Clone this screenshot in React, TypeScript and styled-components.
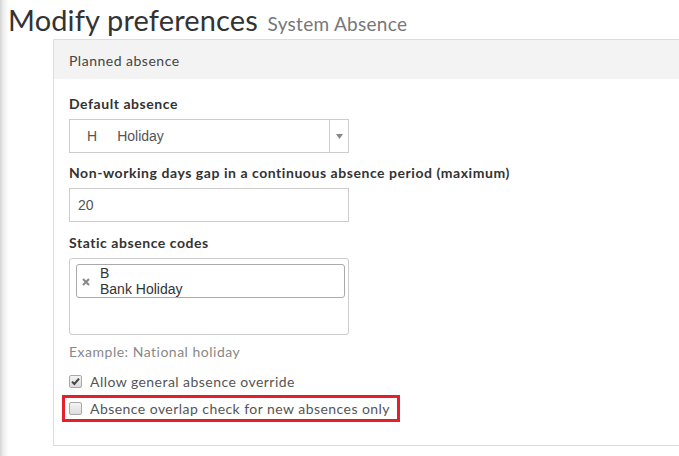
import React, { useState } from 'react';
import { styled, createGlobalStyle } from 'styled-components';

const GlobalStyle = createGlobalStyle`
  html, body {
    margin: 0;
    padding: 0;
    background: #fff;
  }
  body {
    font-family: Lato, "Open Sans", sans-serif;
    color: #333;
    overflow: hidden;
  }
`;

const Page = styled.div`
  width: 679px;
  height: 456px;
  overflow: hidden;
  padding-left: 8px;
  box-sizing: border-box;
  background: linear-gradient(to right, #d4d4d4 0px, #ececec 3px, #fafafa 7px, #fff 9px);
`;

const Title = styled.h1`
  margin: 0;
  padding-top: 3px;
  height: 36px;
  font-size: 29px;
  line-height: 34px;
  font-weight: 400;
  letter-spacing: 0.15px;
  color: #333;
  white-space: nowrap;

  small {
    font-size: 19px;
    letter-spacing: 0.3px;
    color: #777;
    margin-left: 2px;
  }
`;

const Panel = styled.section`
  margin-left: 45px;
  width: 700px;
  border: 1px solid #ddd;
  background: #fff;
`;

const PanelHeading = styled.div`
  height: 39px;
  line-height: 41px;
  padding: 0 15px;
  background: #f3f3f3;
  font-size: 14px;
  letter-spacing: 0.5px;
  color: #444;
`;

const PanelBody = styled.div`
  padding: 15px 15px 23px;
`;

const Label = styled.label<{ $top?: number }>`
  display: block;
  margin-top: ${(p) => p.$top ?? 0}px;
  margin-bottom: 5px;
  line-height: 20px;
  font-size: 14px;
  font-weight: 700;
  letter-spacing: 0.55px;
  color: #333;
`;

const SelectBox = styled.div`
  display: flex;
  width: 280px;
  height: 34px;
  box-sizing: border-box;
  border: 1px solid #ccc;
  font-family: "Liberation Sans", Arial, sans-serif;
  font-size: 14px;
  color: #555;
`;

const SelectValue = styled.div`
  flex: 1;
  display: flex;
  align-items: center;
  padding-left: 17px;
  gap: 20px;
`;

const SelectArrow = styled.div`
  width: 18px;
  border-left: 1px solid #ccc;
  display: flex;
  align-items: center;
  justify-content: center;
`;

const TextInput = styled.input`
  display: block;
  width: 280px;
  height: 34px;
  box-sizing: border-box;
  border: 1px solid #ccc;
  padding: 0 8px;
  font-family: "Liberation Sans", Arial, sans-serif;
  font-size: 14px;
  color: #555;
  outline: none;
`;

const TagArea = styled.div`
  width: 280px;
  height: 77px;
  box-sizing: border-box;
  border: 1px solid #ccc;
  border-radius: 3px;
  padding: 5px 3px 6px 6px;
`;

const Tag = styled.div`
  display: flex;
  align-items: center;
  height: 34px;
  box-sizing: border-box;
  border: 1px solid #aaa;
  border-radius: 3px;
  padding: 0 6px 0 5px;
  font-family: "Liberation Sans", Arial, sans-serif;
  font-size: 14px;
  line-height: 16px;
  color: #333;
`;

const TagRemove = styled.span`
  width: 10px;
  margin-right: 8px;
  display: flex;
  align-items: center;
  margin-top: 1px;
`;

const HelpText = styled.div`
  margin-top: 7px;
  line-height: 20px;
  font-size: 14px;
  letter-spacing: 0.5px;
  color: #888;
`;

const CheckList = styled.div`
  margin-top: 9px;
`;

const CheckRow = styled.label`
  display: flex;
  align-items: center;
  gap: 8px;
  height: 20px;
  font-size: 14px;
  letter-spacing: 0.45px;
  color: #555;
  cursor: pointer;
`;

const Box = styled.span`
  width: 11px;
  height: 11px;
  flex: none;
  border: 1px solid #a8a8a8;
  border-radius: 2px;
  background: linear-gradient(#f4f4f4, #dcdcdc);
  display: flex;
  align-items: center;
  justify-content: center;
`;

const Highlight = styled.div`
  display: inline-block;
  margin-top: 4px;
  margin-left: -7px;
  padding: 0 7px 1px 4px;
  border: 3px solid #e5202a;
`;

function Checkbox({ checked, onToggle, children }: { checked: boolean; onToggle: () => void; children: React.ReactNode }) {
  return (
    <CheckRow onClick={onToggle}>
      <Box>
        {checked && (
          <svg width="9" height="9" viewBox="0 0 9 9">
            <path d="M1 4.6 L3.4 7 L8 1.6" fill="none" stroke="#444" strokeWidth="2" />
          </svg>
        )}
      </Box>
      {children}
    </CheckRow>
  );
}

export default function App() {
  const [allowOverride, setAllowOverride] = useState(true);
  const [overlapOnly, setOverlapOnly] = useState(false);
  const [gap, setGap] = useState('20');

  return (
    <>
      <GlobalStyle />
      <Page>
        <Title>
          Modify preferences <small>System Absence</small>
        </Title>
        <Panel>
          <PanelHeading>Planned absence</PanelHeading>
          <PanelBody>
            <Label>Default absence</Label>
            <SelectBox>
              <SelectValue>
                <span>H</span>
                <span>Holiday</span>
              </SelectValue>
              <SelectArrow>
                <svg width="7" height="5" viewBox="0 0 7 5">
                  <path d="M0 0 H7 L3.5 5 Z" fill="#888" />
                </svg>
              </SelectArrow>
            </SelectBox>

            <Label $top={10}>Non-working days gap in a continuous absence period (maximum)</Label>
            <TextInput value={gap} onChange={(e) => setGap(e.target.value)} />

            <Label $top={11}>Static absence codes</Label>
            <TagArea>
              <Tag>
                <TagRemove>
                  <svg width="8" height="8" viewBox="0 0 8 8">
                    <path d="M1 1 L7 7 M7 1 L1 7" stroke="#888" strokeWidth="2" />
                  </svg>
                </TagRemove>
                <span>
                  B
                  <br />
                  Bank Holiday
                </span>
              </Tag>
            </TagArea>
            <HelpText>Example: National holiday</HelpText>

            <CheckList>
              <Checkbox checked={allowOverride} onToggle={() => setAllowOverride(!allowOverride)}>
                Allow general absence override
              </Checkbox>
              <Highlight>
                <Checkbox checked={overlapOnly} onToggle={() => setOverlapOnly(!overlapOnly)}>
                  Absence overlap check for new absences only
                </Checkbox>
              </Highlight>
            </CheckList>
          </PanelBody>
        </Panel>
      </Page>
    </>
  );
}
